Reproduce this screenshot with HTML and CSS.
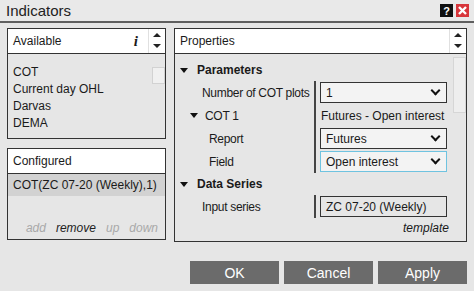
FILE: index.html
```html
<!DOCTYPE html>
<html lang="en">
<head>
  <meta charset="UTF-8">
  <title>Indicators</title>
  <link rel="stylesheet" href="styles.css">
</head>
<body>
  <div class="dialog">
    <header class="titlebar">
      <span class="title">Indicators</span>
      <div class="title-buttons">
        <span class="btn-help">?</span>
        <span class="btn-close">
          <svg width="9" height="9" viewBox="0 0 9 9"><path d="M1 1 L8 8 M8 1 L1 8" stroke="#fff" stroke-width="2.4"/></svg>
        </span>
      </div>
    </header>

    <div class="main">
      <div class="left-col">
        <div class="panel available">
          <div class="panel-head">
            <span>Available</span>
            <span class="info">i</span>
            <span class="spin">
              <svg width="8" height="16" viewBox="0 0 8 16"><path d="M0 4 L4 0 L8 4 Z M0 11 L8 11 L4 15 Z" fill="#222"/></svg>
            </span>
          </div>
          <div class="list">
            <div class="list-item">COT</div>
            <div class="list-item">Current day OHL</div>
            <div class="list-item">Darvas</div>
            <div class="list-item">DEMA</div>
            <div class="mini-thumb"></div>
          </div>
        </div>

        <div class="panel configured">
          <div class="panel-head"><span>Configured</span></div>
          <div class="list-selected">COT(ZC 07-20 (Weekly),1)</div>
          <div class="actions">
            <span class="off">add</span>
            <span class="on">remove</span>
            <span class="off">up</span>
            <span class="off">down</span>
          </div>
        </div>
      </div>

      <div class="panel properties">
        <div class="panel-head">
          <span>Properties</span>
          <span class="spin">
            <svg width="8" height="16" viewBox="0 0 8 16"><path d="M0 4 L4 0 L8 4 Z M0 11 L8 11 L4 15 Z" fill="#222"/></svg>
          </span>
        </div>
        <div class="props-body">
          <div class="props">
            <div class="group-row">
              <span class="tri"></span>Parameters
            </div>
            <div class="row">
              <div class="label">Number of COT plots</div>
              <div class="value"><div class="select">1<span class="chev"></span></div></div>
            </div>
            <div class="row">
              <div class="label sub"><span class="tri small"></span>COT 1</div>
              <div class="value"><span class="plain">Futures - Open interest</span></div>
            </div>
            <div class="row">
              <div class="label deep">Report</div>
              <div class="value"><div class="select">Futures<span class="chev"></span></div></div>
            </div>
            <div class="row">
              <div class="label deep">Field</div>
              <div class="value"><div class="select focus">Open interest<span class="chev"></span></div></div>
            </div>
            <div class="group-row">
              <span class="tri"></span>Data Series
            </div>
            <div class="row">
              <div class="label">Input series</div>
              <div class="value"><div class="input">ZC 07-20 (Weekly)</div></div>
            </div>
            <div class="template">template</div>
          </div>
          <div class="scrollbar"><div class="thumb"></div></div>
        </div>
      </div>
    </div>

    <footer class="footer">
      <button>OK</button>
      <button>Cancel</button>
      <button>Apply</button>
    </footer>
  </div>
</body>
</html>
```

FILE: styles.css
```css
body {
  margin: 0;
  font-family: "Liberation Sans", Arial, sans-serif;
  font-size: 12px;
  color: #1a1a1a;
  background-color: #e6e6e6;
}

.dialog {
  width: 474px;
  height: 291px;
  background-color: #e6e6e6;
}

.titlebar {
  height: 21px;
  display: flex;
  align-items: center;
  justify-content: space-between;
  border-bottom: 2px solid #5f5f5f;
  background-color: #e9e9e9;
}

.title {
  font-size: 15px;
  margin-left: 6px;
  color: #222;
}

.title-buttons {
  display: flex;
  gap: 3px;
  margin-right: 5px;
}

.btn-help, .btn-close {
  width: 13px;
  height: 13px;
  display: flex;
  align-items: center;
  justify-content: center;
}

.btn-help {
  background-color: #111;
  color: #fff;
  font-weight: bold;
  font-size: 11px;
}

.btn-close {
  background-color: #d8363b;
}

.main {
  display: flex;
  gap: 8px;
  padding: 5px 7px 0 7px;
}

.left-col {
  display: flex;
  flex-direction: column;
  gap: 9px;
  width: 159px;
}

.panel {
  border: 1px solid #333;
  box-sizing: border-box;
  background-color: #e6e6e6;
}

.panel-head {
  height: 24px;
  background-color: #fff;
  border-bottom: 1px solid #333;
  display: flex;
  align-items: center;
  padding-left: 5px;
}

.panel-head span:first-child {
  flex: 1;
}

.info {
  font-family: "Liberation Serif", serif;
  font-style: italic;
  font-weight: bold;
  font-size: 15px;
  margin-right: 10px;
}

.spin {
  display: flex;
  width: 16px;
  justify-content: center;
  border-left: 1px solid #e0e0e0;
  height: 100%;
  align-items: center;
}

.available {
  height: 111px;
}

.list {
  position: relative;
  padding-top: 10px;
}

.list-item {
  height: 17px;
  line-height: 17px;
  padding-left: 5px;
}

.mini-thumb {
  position: absolute;
  right: 0;
  top: 13px;
  width: 13px;
  height: 17px;
  background-color: #f0f0f0;
  border: 1px solid #d2d2d2;
  box-sizing: border-box;
}

.configured {
  height: 92px;
  display: flex;
  flex-direction: column;
}

.list-selected {
  background-color: #d2d2d2;
  height: 22px;
  line-height: 22px;
  padding-left: 5px;
}

.actions {
  margin-top: auto;
  display: flex;
  justify-content: flex-end;
  gap: 10px;
  padding: 0 7px 4px 0;
  font-style: italic;
  font-size: 12px;
}

.actions .off {
  color: #a9a9a9;
}

.actions .on {
  color: #222;
}

.properties {
  width: 293px;
  height: 214px;
  display: flex;
  flex-direction: column;
}

.props-body {
  flex: 1;
  display: flex;
}

.props {
  flex: 1;
  padding-top: 5px;
}

.scrollbar {
  width: 13px;
  padding-top: 3px;
}

.thumb {
  height: 56px;
  background-color: #eeeeee;
  border: 1px solid #d6d6d6;
  box-sizing: border-box;
}

.group-row {
  height: 22px;
  display: flex;
  align-items: center;
  font-weight: bold;
  padding-left: 5px;
}

.tri {
  width: 0;
  height: 0;
  border-left: 4px solid transparent;
  border-right: 4px solid transparent;
  border-top: 5px solid #111;
  margin-right: 9px;
}

.tri.small {
  margin-right: 7px;
}

.row {
  display: flex;
  height: 23px;
}

.label {
  width: 139px;
  box-sizing: border-box;
  padding-left: 27px;
  display: flex;
  align-items: center;
  white-space: nowrap;
  letter-spacing: -0.3px;
}

.label.sub {
  padding-left: 15px;
}

.label.deep {
  padding-left: 34px;
}

.value {
  flex: 1;
  border-left: 2px solid #444;
  padding: 1px 0 1px 4px;
  display: flex;
  align-items: center;
  white-space: nowrap;
}

.plain {
  padding-left: 1px;
}

.select, .input {
  width: 127px;
  height: 21px;
  box-sizing: border-box;
  border: 1px solid #333;
  background-color: #f3f3f3;
  display: flex;
  align-items: center;
  justify-content: space-between;
  padding: 0 7px 0 5px;
}

.select.focus {
  border-color: #6fc3e0;
}

.input {
  background-color: #e6e6e6;
}

.chev {
  width: 5px;
  height: 5px;
  border-right: 2px solid #111;
  border-bottom: 2px solid #111;
  transform: rotate(45deg);
  margin-top: -4px;
}

.template {
  text-align: right;
  font-style: italic;
  padding-right: 4px;
  margin-top: 3px;
}

.footer {
  display: flex;
  justify-content: flex-end;
  gap: 5px;
  padding: 19px 7px 0 0;
}

.footer button {
  width: 89px;
  height: 23px;
  border: none;
  background-color: #6b6b6b;
  color: #fff;
  font-family: "Liberation Sans", Arial, sans-serif;
  font-size: 14px;
  padding: 0;
}
```
